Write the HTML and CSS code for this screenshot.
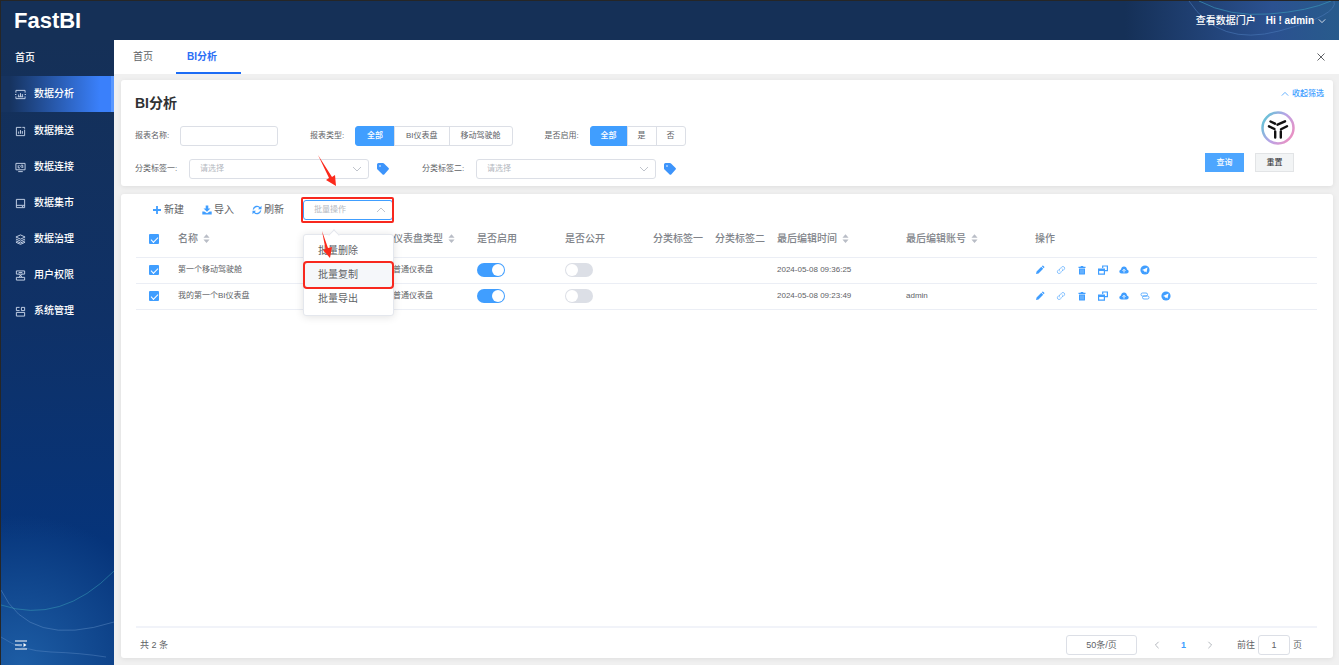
FILE: index.html
```html
<!DOCTYPE html>
<html lang="zh-CN">
<head>
    <meta charset="UTF-8">
    <title>FastBI</title>
    <link rel="stylesheet" href="styles.css">
</head>
<body>
    <!--图标-->
    <svg class="symbols" aria-hidden="true">
        <symbol id="i-down" viewBox="0 0 10 10"><path d="M1 3l4 4 4-4" fill="none" stroke="currentColor"/></symbol>
        <symbol id="i-up" viewBox="0 0 10 10"><path d="M1 7l4-4 4 4" fill="none" stroke="currentColor"/></symbol>
        <symbol id="i-tag" viewBox="0 0 14 14"><path d="M1 2.500Q1 1 2.500 1H7q.6 0 1 .4l4.600 4.600q.8.800 0 1.600L8.200 12.400q-.8.800-1.600 0L1.500 7.500Q1 7 1 6.400z" fill="currentColor"/><circle cx="4" cy="4" r=".8" fill="#fff"/></symbol>
        <symbol id="i-sort" viewBox="0 0 8 10"><path d="M4 0l3.500 4h-7zM4 10L.5 6h7z" fill="currentColor"/></symbol>
        <symbol id="i-edit" viewBox="0 0 10 10"><path d="M1 9l.6-2.500 4.700-4.700 1.900 1.900-4.700 4.700zM6.800 1.300l.6-.6q.4-.3.8 0l1.100 1.100q.3.400 0 .8l-.6.600z" fill="currentColor"/></symbol>
        <symbol id="i-link" viewBox="0 0 10 10"><path d="M4 6.500q-1.500-1-.3-2.500L5.800 1.900q1.300-1 2.400.1 1 1.200 0 2.400L7 5.600M6 3.500q1.500 1 .3 2.500L4.200 8.100q-1.300 1-2.400-.1-1-1.200 0-2.400L3 4.400" fill="none" stroke="currentColor" stroke-width=".8" opacity=".75"/></symbol>
        <symbol id="i-del" viewBox="0 0 10 10"><path d="M1.500 1.800h2l.4-.9h2.200l.4.900h2v1.100h-7zM2 3.400h6V9q0 .6-.6.600H2.600Q2 9.600 2 9z" fill="currentColor"/><path d="M4 4.500v4M6 4.500v4" stroke="#fff" stroke-width=".4"/></symbol>
        <symbol id="i-copy" viewBox="0 0 10 10"><path d="M4.700 3V1h4.700v4.700H7M.6 4h5.800v5.200H.6z" fill="none" stroke="currentColor" stroke-width="1.200"/><path d="M.6 4h5.800v2H.6z" fill="currentColor"/></symbol>
        <symbol id="i-cloud" viewBox="0 0 10 10"><path d="M2.500 8.500Q.3 8.300.3 6.400.3 4.800 2 4.400 2.400 1.500 5 1.500T8 4.400q1.700.4 1.700 2Q9.700 8.300 7.500 8.500z" fill="currentColor"/><path d="M5 7.500V4.500M3.500 5.800L5 4.300l1.500 1.500" fill="none" stroke="#fff" stroke-width=".9"/></symbol>
        <symbol id="i-chain" viewBox="0 0 10 10"><rect x="1" y="2" width="6.500" height="3" rx="1.500" fill="none" stroke="currentColor" stroke-width=".8"/><rect x="2.500" y="5" width="6.500" height="3" rx="1.500" fill="none" stroke="currentColor" stroke-width=".8"/></symbol>
        <symbol id="i-send" viewBox="0 0 10 10"><circle cx="5" cy="5" r="4.600" fill="currentColor"/><path d="M2 5l5.500-2.500-1 5-1.700-1.300-.8 1V5.700z" fill="#fff"/></symbol>
    </svg>

    <header class="header">
        <svg class="header-bg" viewBox="0 0 220 39" aria-hidden="true">
            <path d="M70 0Q100 46 160 30T215 0" fill="none" stroke="#4a78b8" opacity=".6"/>
            <path d="M80 0Q110 16 150 13T212 0" fill="none" stroke="#3b93b5" opacity=".7"/>
        </svg>
        <h1 class="logo">FastBI</h1>
        <div class="user">
            <a href="#">查看数据门户</a>
            <button type="button" class="user-name">Hi ! admin <svg width="8" height="8"><use href="#i-down"/></svg></button>
        </div>
    </header>

    <div class="wrap">
        <nav class="side">
            <svg class="side-bg" viewBox="0 0 113 100" aria-hidden="true">
                <path d="M0 25Q28 84 113 57" fill="none" stroke="#6f9ad0" opacity=".4"/>
                <path d="M0 40Q60 60 113 6" fill="none" stroke="#3aa0b8" opacity=".5"/>
                <path d="M0 72Q20 86 50 87T105 92" fill="none" stroke="#6f9ad0" opacity=".35"/>
            </svg>
            <a class="menu home" href="#">首页</a>
            <a class="menu active" href="#"><svg viewBox="0 0 12 12"><path d="M1 4V1.500h10V4M1 8v2.500h10V8M0 6h1.500M10.500 6H12M4 8.500V6M6 8.500v-4M8 8.500V5.500M3 8.500h6"/></svg>数据分析</a>
            <a class="menu" href="#"><svg viewBox="0 0 12 12"><path d="M7 1.500H1.500v9h9V4M8 1.500h2.500V3M4 8.500V6M6 8.500v-4M8 8.500V5.500"/></svg>数据推送</a>
            <a class="menu" href="#"><svg viewBox="0 0 12 12"><path d="M1 1.500h10v7H1zM3.500 10.500h5M3.500 3.500v3h2M5 3.500l3 3M6.500 3.500h2v3"/></svg>数据连接</a>
            <a class="menu" href="#"><svg viewBox="0 0 12 12"><path d="M1.500 1.500h9v9h-9zM1.500 8h9M7.500 9.200H9"/></svg>数据集市</a>
            <a class="menu" href="#"><svg viewBox="0 0 12 12"><path d="M6 1l5 2.300-5 2.300-5-2.300zM1 5.500l5 2.300 5-2.300M1 7.500l5 2.300 5-2.300M1 9l5 2.300L11 9"/></svg>数据治理</a>
            <a class="menu" href="#"><svg viewBox="0 0 12 12"><path d="M1.500 1h9v3.500h-9zM1.500 8h9v3h-9zM4 4.500l4 3.500M8 4.500l-4 3.500M4 2.700h4"/></svg>用户权限</a>
            <a class="menu" href="#"><svg viewBox="0 0 12 12"><path d="M5 1.500H1.500V5H5M7 1.500h3.500V5H7zM1.500 7h9v4h-9z"/></svg>系统管理</a>
            <button type="button" class="fold" aria-label="展开菜单"><svg viewBox="0 0 12 12"><path d="M0 2h12M0 6h7M0 10h12" stroke="#fff" stroke-width="1.200"/><path d="M8.500 4l3 2-3 2z" fill="#fff"/></svg></button>
        </nav>

        <main class="main">
            <div class="tabs">
                <a href="#">首页</a>
                <a href="#" class="on">BI分析</a>
                <button type="button" class="close" aria-label="关闭"><svg viewBox="0 0 10 10"><path d="M1.500 1.500l7 7M8.500 1.500l-7 7" stroke="#606266"/></svg></button>
            </div>

            <!--查询条件-->
            <form class="card search" action="#" method="get">
                <div class="conditions">
                    <h2>BI分析</h2>
                    <div class="line">
                        <div class="item">
                            <label for="name">报表名称:</label>
                            <input id="name" class="text" type="text">
                        </div>
                        <div class="item" role="radiogroup" aria-labelledby="type-label">
                            <span class="label" id="type-label">报表类型:</span>
                            <div class="radios">
                                <label><input type="radio" name="type" checked><span>全部</span></label>
                                <label><input type="radio" name="type"><span>BI仪表盘</span></label>
                                <label><input type="radio" name="type"><span>移动驾驶舱</span></label>
                            </div>
                        </div>
                        <div class="item" role="radiogroup" aria-labelledby="enable-label">
                            <span class="label" id="enable-label">是否启用:</span>
                            <div class="radios short">
                                <label><input type="radio" name="enable" checked><span>全部</span></label>
                                <label><input type="radio" name="enable"><span>是</span></label>
                                <label><input type="radio" name="enable"><span>否</span></label>
                            </div>
                        </div>
                    </div>
                    <div class="line">
                        <div class="item wide">
                            <label for="tag1">分类标签一:</label>
                            <div class="select"><select id="tag1"><option>请选择</option></select><svg><use href="#i-down"/></svg></div>
                            <svg class="tag"><use href="#i-tag"/></svg>
                        </div>
                        <div class="item wide">
                            <label for="tag2">分类标签二:</label>
                            <div class="select"><select id="tag2"><option>请选择</option></select><svg><use href="#i-down"/></svg></div>
                            <svg class="tag"><use href="#i-tag"/></svg>
                        </div>
                    </div>
                </div>
                <div class="search-right">
                    <a class="collapse" href="#"><svg width="8" height="8"><use href="#i-up"/></svg>收起筛选</a>
                    <svg class="assistant" viewBox="0 0 34 34">
                        <defs>
                            <linearGradient id="ring" x1="0" y1=".2" x2="1" y2=".8">
                                <stop offset="0" stop-color="#62c4d6"/>
                                <stop offset=".5" stop-color="#b9a3e6"/>
                                <stop offset="1" stop-color="#ee8fc0"/>
                            </linearGradient>
                        </defs>
                        <circle cx="17" cy="17" r="15.500" fill="#fff" stroke="url(#ring)" stroke-width="2.500"/>
                        <path d="M9.500 10.500l4.500 2.200M16.500 13.700l7.500-3.400M8 15.300l5.500 2.700M14.200 20.500v6M19.800 26.500v-6M20 18.200l6-3" fill="none" stroke="#111" stroke-width="2.400" stroke-linecap="round"/>
                    </svg>
                    <div class="btns">
                        <button type="submit" class="primary">查询</button>
                        <button type="reset">重置</button>
                    </div>
                </div>
            </form>

            <!--列表-->
            <section class="card list">
                <div class="toolbar">
                    <button type="button" class="tool"><svg viewBox="0 0 10 10"><path d="M5 1v8M1 5h8" stroke="currentColor" stroke-width="1.800"/></svg>新建</button>
                    <button type="button" class="tool"><svg viewBox="0 0 10 10"><path d="M3.700.5h2.600v3H8.500L5 6.800 1.500 3.500h2.200zM.3 6.500h2L5 8.300l2.700-1.800h2v3H.3z" fill="currentColor"/></svg>导入</button>
                    <button type="button" class="tool"><svg viewBox="0 0 10 10"><path d="M1.300 4.500A3.800 3.800 0 0 1 8 2.800M8.700 5.500A3.800 3.800 0 0 1 2 7.200" fill="none" stroke="currentColor" stroke-width="1.300"/><path d="M9.500.8v3.500H6zM.5 9.200V5.700H4z" fill="currentColor"/></svg>刷新</button>
                    <div class="batch">
                        <div class="select focus"><select aria-label="批量操作"><option>批量操作</option></select><svg><use href="#i-up"/></svg></div>
                        <div class="mark mark-select"></div>
                        <ul class="menu-pop">
                            <li><button type="button">批量删除</button></li>
                            <li class="hover"><button type="button">批量复制</button></li>
                            <li><button type="button">批量导出</button></li>
                        </ul>
                        <svg class="arrow arrow-select" viewBox="0 0 22 34"><path d="M1 1l14 22 3-2 1 11-10-6 3-2z" fill="#fb2a1c"/></svg>
                        <svg class="arrow arrow-item" viewBox="0 0 14 30"><path d="M2 1l6 17 4-1-2 11-7-8 2.500-1z" fill="#fb2a1c"/></svg>
                    </div>
                </div>

                <table>
                    <colgroup>
                        <col class="c-check"><col class="c-name"><col class="c-type"><col class="c-switch"><col class="c-switch">
                        <col class="c-tag"><col class="c-tag"><col class="c-edit"><col class="c-edit"><col>
                    </colgroup>
                    <thead>
                        <tr>
                            <th class="check"><input type="checkbox" class="tick" aria-label="全选" checked></th>
                            <th>名称<svg class="sort"><use href="#i-sort"/></svg></th>
                            <th>仪表盘类型<svg class="sort"><use href="#i-sort"/></svg></th>
                            <th>是否启用</th>
                            <th>是否公开</th>
                            <th>分类标签一</th>
                            <th>分类标签二</th>
                            <th>最后编辑时间<svg class="sort"><use href="#i-sort"/></svg></th>
                            <th>最后编辑账号<svg class="sort"><use href="#i-sort"/></svg></th>
                            <th>操作</th>
                        </tr>
                    </thead>
                    <tbody>
                        <tr>
                            <td class="check"><input type="checkbox" class="tick" aria-label="选择" checked></td>
                            <td>第一个移动驾驶舱</td>
                            <td>普通仪表盘</td>
                            <td><input type="checkbox" class="switch" aria-label="是否启用" checked></td>
                            <td><input type="checkbox" class="switch" aria-label="是否公开"></td>
                            <td></td>
                            <td></td>
                            <td>2024-05-08 09:36:25</td>
                            <td></td>
                            <td>
                                <div class="ops">
                                    <button type="button" aria-label="编辑"><svg><use href="#i-edit"/></svg></button>
                                    <button type="button" aria-label="链接"><svg><use href="#i-link"/></svg></button>
                                    <button type="button" aria-label="删除"><svg><use href="#i-del"/></svg></button>
                                    <button type="button" aria-label="复制"><svg><use href="#i-copy"/></svg></button>
                                    <button type="button" aria-label="导出"><svg><use href="#i-cloud"/></svg></button>
                                    <button type="button" aria-label="发布"><svg><use href="#i-send"/></svg></button>
                                </div>
                            </td>
                        </tr>
                        <tr>
                            <td class="check"><input type="checkbox" class="tick" aria-label="选择" checked></td>
                            <td>我的第一个BI仪表盘</td>
                            <td>普通仪表盘</td>
                            <td><input type="checkbox" class="switch" aria-label="是否启用" checked></td>
                            <td><input type="checkbox" class="switch" aria-label="是否公开"></td>
                            <td></td>
                            <td></td>
                            <td>2024-05-08 09:23:49</td>
                            <td>admin</td>
                            <td>
                                <div class="ops">
                                    <button type="button" aria-label="编辑"><svg><use href="#i-edit"/></svg></button>
                                    <button type="button" aria-label="链接"><svg><use href="#i-link"/></svg></button>
                                    <button type="button" aria-label="删除"><svg><use href="#i-del"/></svg></button>
                                    <button type="button" aria-label="复制"><svg><use href="#i-copy"/></svg></button>
                                    <button type="button" aria-label="导出"><svg><use href="#i-cloud"/></svg></button>
                                    <button type="button" aria-label="关联"><svg><use href="#i-chain"/></svg></button>
                                    <button type="button" aria-label="发布"><svg><use href="#i-send"/></svg></button>
                                </div>
                            </td>
                        </tr>
                    </tbody>
                </table>

                <!--分页-->
                <div class="pager">
                    <span class="total">共 2 条</span>
                    <select class="size" aria-label="每页条数"><option>50条/页</option></select>
                    <button type="button" class="turn prev" aria-label="上一页"><svg><use href="#i-down"/></svg></button>
                    <button type="button" class="current">1</button>
                    <button type="button" class="turn next" aria-label="下一页"><svg><use href="#i-down"/></svg></button>
                    <label for="page">前往</label>
                    <input id="page" type="text" value="1">
                    <span>页</span>
                </div>
            </section>
        </main>
    </div>
</body>
</html>
```
FILE: styles.css
```css
*{
    margin: 0;
    padding: 0;
    box-sizing: border-box;
    list-style: none;
}
body{
    display: flex;
    flex-direction: column;
    min-height: 100vh;
    border-top: 1px solid #262626;
    border-left: 1px solid #262626;
    background: #f0f0f0;
    color: #606266;
    font-family: "Liberation Sans", "Noto Sans CJK SC", sans-serif;
    font-size: 8px;
    line-height: 12px;
}
a{
    color: inherit;
    text-decoration: none;
}
button,input,select{
    font: inherit;
    color: inherit;
    border: none;
    background: none;
    outline: none;
}
svg{
    display: block;
    flex: none;
}
.symbols{
    position: absolute;
    width: 0;
    height: 0;
}

/* 顶部 */
.header{
    position: relative;
    display: flex;
    align-items: center;
    justify-content: space-between;
    height: 39px;
    padding: 0 13px;
    background: linear-gradient(to right, transparent 84%, #2b5190 95%, #285b8c), #153057;
    color: #fff;
}
.header-bg{
    position: absolute;
    right: 0;
    top: 0;
    width: 220px;
    height: 39px;
}
.logo{
    font: bold 22px/38px "Liberation Sans", sans-serif;
}
.user{
    position: relative;
    display: flex;
    gap: 10px;
    font-size: 10px;
    font-weight: 500;
}
.user-name{
    display: flex;
    align-items: center;
    gap: 4px;
    font-weight: bold;
}

/* 左侧菜单 */
.wrap{
    display: flex;
    flex: 1;
}
.side{
    position: relative;
    display: flex;
    flex-direction: column;
    width: 113px;
    background: radial-gradient(circle at 20px 100%, #1d5da5, transparent 150px), linear-gradient(#153057, #0f3167 45%, #06347a 80%);
    color: #fff;
    font-size: 10px;
    font-weight: 500;
}
.side-bg{
    position: absolute;
    left: 0;
    bottom: 0;
    width: 113px;
    height: 100px;
}
.menu{
    display: flex;
    align-items: center;
    gap: 8px;
    height: 36px;
    padding-left: 14px;
}
.menu svg{
    width: 11px;
    height: 11px;
    fill: none;
    stroke: #cdd9ec;
    stroke-width: 1;
}
.menu.active{
    margin-bottom: 1px;
    background: linear-gradient(to right, #16335f 8%, #3a80fb 90%);
    border-right: 3px solid #5a98ff;
}
.fold{
    position: relative;
    margin: auto 0 14px 14px;
    width: 12px;
    height: 12px;
}

/* 标签页 */
.main{
    flex: 1;
    display: flex;
    flex-direction: column;
    min-width: 0;
}
.tabs{
    display: flex;
    height: 34px;
    padding: 0 13px 0 19px;
    background: #fff;
    font-size: 10px;
    line-height: 34px;
}
.tabs .on{
    margin-left: 23px;
    padding: 0 24px 0 11px;
    border-bottom: 2px solid #1c6cf5;
    color: #2b6ef5;
    font-weight: bold;
}
.close{
    margin-left: auto;
}
.close svg{
    width: 10px;
    height: 10px;
}
.card{
    margin: 6px 6px 0 7px;
    border-radius: 3px;
    background: #fff;
    box-shadow: 0 1px 5px rgba(0, 0, 0, 0.08);
}

/* 查询条件 */
.search{
    display: flex;
    justify-content: space-between;
}
.conditions{
    display: flex;
    flex-direction: column;
    gap: 13px;
    padding: 14px 0 7px 14px;
}
h2{
    color: #303133;
    font-size: 14px;
    line-height: 19px;
}
.line{
    display: flex;
    gap: 32px;
}
.item{
    display: flex;
    align-items: center;
}
.item > label,.label{
    width: 45px;
}
.wide > label{
    width: 54px;
}
.text{
    width: 98px;
    height: 20px;
    padding: 0 6px;
    border: 1px solid #dcdfe6;
    border-radius: 3px;
}
.radios{
    display: flex;
}
.radios input{
    position: absolute;
    opacity: 0;
}
.radios span{
    display: block;
    height: 20px;
    margin-left: -1px;
    padding: 0 11px;
    border: 1px solid #dcdfe6;
    line-height: 18px;
}
.radios.short span{
    padding: 0 10px;
}
.radios label:first-child span{
    margin-left: 0;
    border-radius: 3px 0 0 3px;
}
.radios label:last-child span{
    border-radius: 0 3px 3px 0;
}
.radios input:checked + span{
    border-color: #409eff;
    background: #409eff;
    color: #fff;
    font-weight: 500;
}
.select{
    position: relative;
    width: 180px;
    height: 20px;
}
.select select{
    display: block;
    width: 100%;
    height: 100%;
    padding: 0 10px;
    border: 1px solid #dcdfe6;
    border-radius: 3px;
    background: #fff;
    color: #b4b8c0;
    appearance: none;
}
.select svg{
    position: absolute;
    right: 7px;
    top: 5px;
    width: 10px;
    height: 10px;
    color: #c0c4cc;
    pointer-events: none;
}
.tag{
    width: 14px;
    height: 14px;
    margin-left: 7px;
    color: #3d94fb;
}
.search-right{
    display: flex;
    flex-direction: column;
    align-items: flex-end;
    padding: 8px 9px 0 0;
}
.collapse{
    display: flex;
    align-items: center;
    gap: 3px;
    color: #409eff;
    font-weight: 500;
}
.assistant{
    width: 34px;
    height: 34px;
    margin: 11px 29px 8px 0;
}
.btns{
    display: flex;
    gap: 11px;
    margin-right: 30px;
}
.btns button{
    width: 39px;
    height: 19px;
    border: 1px solid #e2e4e6;
    background: #f2f4f5;
    color: #303133;
}
.btns .primary{
    border-color: #4da6ff;
    background: #4da6ff;
    color: #fff;
    font-weight: 500;
}

/* 列表 */
.list{
    flex: 1;
    display: flex;
    flex-direction: column;
    margin-top: 8px;
    margin-bottom: 7px;
    padding: 0 16px 0 15px;
}
.toolbar{
    display: flex;
    gap: 18px;
    padding: 6px 16px 2px;
}
.tool{
    display: flex;
    align-items: center;
    gap: 2px;
    font-size: 10px;
}
.tool svg{
    width: 10px;
    height: 10px;
    color: #409eff;
}
.batch{
    position: relative;
    margin-left: 1px;
}
.focus{
    width: 90px;
}
.focus select{
    border-color: #409eff;
}
.menu-pop{
    position: absolute;
    z-index: 2;
    left: 0;
    top: 34px;
    width: 91px;
    padding: 4px 1px;
    border: 1px solid #e4e7ed;
    border-radius: 3px;
    background: #fff;
    box-shadow: 0 1px 8px rgba(0, 0, 0, 0.12);
}
.menu-pop::before{
    content: "";
    position: absolute;
    left: 26px;
    top: -4px;
    width: 7px;
    height: 7px;
    border-top: 1px solid #e4e7ed;
    border-left: 1px solid #e4e7ed;
    background: #fff;
    transform: rotate(45deg);
}
.menu-pop button{
    display: block;
    width: 100%;
    height: 24px;
    padding-left: 13px;
    font-size: 10px;
    text-align: left;
}
.menu-pop .hover{
    background: #f5f7fa;
    border-radius: 2px;
    outline: 2px solid #f8281e;
}
.mark-select{
    position: absolute;
    left: -2px;
    top: -3px;
    width: 93px;
    height: 26px;
    border: 2px solid #f8281e;
    border-radius: 2px;
    pointer-events: none;
}
.arrow{
    position: absolute;
    z-index: 3;
    pointer-events: none;
}
.arrow-select{
    left: 14px;
    top: -46px;
    width: 22px;
    height: 34px;
}
.arrow-item{
    left: 17px;
    top: 30px;
    width: 14px;
    height: 30px;
}
table{
    width: 100%;
    table-layout: fixed;
    border-collapse: collapse;
}
.c-check{ width: 36px; }
.c-name{ width: 215px; }
.c-type{ width: 84px; }
.c-switch{ width: 88px; }
.c-tag{ width: 62px; }
.c-edit{ width: 129px; }
th,td{
    padding: 0 0 0 6px;
    border-bottom: 1px solid #ebeef5;
    text-align: left;
    white-space: nowrap;
}
th{
    height: 35px;
    color: #808389;
    font-size: 10px;
    font-weight: 500;
}
td{
    height: 26px;
}
.check{
    padding-left: 13px;
}
.sort{
    display: inline-block;
    width: 7px;
    height: 9px;
    margin-left: 5px;
    color: #b9bdc6;
    vertical-align: -1px;
}
.tick{
    display: block;
    width: 10px;
    height: 10px;
    border-radius: 1px;
    background: #dcdfe6;
    appearance: none;
}
.tick:checked{
    background: #409eff;
}
.tick:checked::after{
    content: "";
    display: block;
    width: 6px;
    height: 3px;
    margin: 0 auto;
    border-left: 1px solid #fff;
    border-bottom: 1px solid #fff;
    transform: translateY(3px) rotate(-45deg);
}
.switch{
    display: block;
    width: 28px;
    height: 14px;
    padding: 1px;
    border-radius: 7px;
    background: #dcdfe6;
    appearance: none;
}
.switch::after{
    content: "";
    display: block;
    width: 12px;
    height: 12px;
    border-radius: 50%;
    background: #fff;
}
.switch:checked{
    background: #409eff;
}
.switch:checked::after{
    margin-left: auto;
}
.ops{
    display: flex;
    gap: 11px;
}
.ops button{
    width: 10px;
    height: 10px;
    color: #409eff;
}
.ops svg{
    width: 10px;
    height: 10px;
}

/* 分页 */
.pager{
    display: flex;
    align-items: center;
    height: 32px;
    margin-top: auto;
    padding: 3px 15px 0 4px;
    border-top: 2px solid #f1f3f9;
    font-size: 9px;
}
.total{
    margin-right: auto;
}
.size,#page{
    height: 20px;
    border: 1px solid #dcdfe6;
    border-radius: 3px;
    text-align: center;
    text-align-last: center;
    appearance: none;
}
.size{
    width: 71px;
    margin-right: 13px;
}
.turn,.current{
    width: 27px;
    height: 20px;
}
.turn{
    width: 14px;
}
.turn svg{
    width: 8px;
    height: 8px;
    margin: 0 auto;
    color: #a0a4ac;
}
.prev svg{
    transform: rotate(90deg);
}
.next svg{
    transform: rotate(-90deg);
}
.current{
    margin: 0 6px;
    color: #409eff;
    font-weight: bold;
}
.next{
    margin-right: 20px;
}
#page{
    width: 32px;
    margin: 0 3px;
}
```
